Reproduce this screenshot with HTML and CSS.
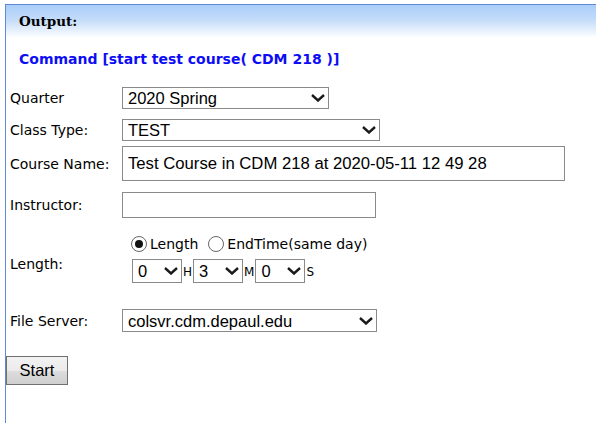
FILE: index.html
```html
<!DOCTYPE html>
<html>
<head>
<meta charset="utf-8">
<title>Output</title>
<link rel="stylesheet" href="styles.css">
</head>
<body>
<div class="panel">
  <div class="panel-head">Output:</div>
  <div class="command">Command [start test course( CDM 218 )]</div>
  <form class="form">
    <div class="row row-quarter">
      <label class="lbl">Quarter</label>
      <span class="sel sel-quarter">
        <select><option>2020 Spring</option></select>
        <svg class="chev" viewBox="0 0 14 8"><path d="M1 1 L7 6.5 L13 1" fill="none" stroke="#1a1a1a" stroke-width="2.4"/></svg>
      </span>
    </div>
    <div class="row row-type">
      <label class="lbl">Class Type:</label>
      <span class="sel sel-type">
        <select><option>TEST</option></select>
        <svg class="chev" viewBox="0 0 14 8"><path d="M1 1 L7 6.5 L13 1" fill="none" stroke="#1a1a1a" stroke-width="2.4"/></svg>
      </span>
    </div>
    <div class="row row-course">
      <label class="lbl">Course Name:</label>
      <input class="txt txt-course" type="text" value="Test Course in CDM 218 at 2020-05-11 12 49 28">
    </div>
    <div class="row row-instr">
      <label class="lbl">Instructor:</label>
      <input class="txt txt-instr" type="text" value="">
    </div>
    <div class="row row-length">
      <label class="lbl">Length:</label>
      <div class="length-box">
        <div class="radios">
          <span class="radio on"></span><span class="rlbl">Length</span>
          <span class="radio"></span><span class="rlbl">EndTime(same day)</span>
        </div>
        <div class="times">
          <span class="sel sel-small">
            <select><option>0</option></select>
            <svg class="chev" viewBox="0 0 14 8"><path d="M1 1 L7 6.5 L13 1" fill="none" stroke="#1a1a1a" stroke-width="2.4"/></svg>
          </span><span class="unit">H</span><span class="sel sel-small">
            <select><option>3</option></select>
            <svg class="chev" viewBox="0 0 14 8"><path d="M1 1 L7 6.5 L13 1" fill="none" stroke="#1a1a1a" stroke-width="2.4"/></svg>
          </span><span class="unit">M</span><span class="sel sel-small">
            <select><option>0</option></select>
            <svg class="chev" viewBox="0 0 14 8"><path d="M1 1 L7 6.5 L13 1" fill="none" stroke="#1a1a1a" stroke-width="2.4"/></svg>
          </span><span class="unit">S</span>
        </div>
      </div>
    </div>
    <div class="row row-server">
      <label class="lbl">File Server:</label>
      <span class="sel sel-server">
        <select><option>colsvr.cdm.depaul.edu</option></select>
        <svg class="chev" viewBox="0 0 14 8"><path d="M1 1 L7 6.5 L13 1" fill="none" stroke="#1a1a1a" stroke-width="2.4"/></svg>
      </span>
    </div>
    <div class="btn-row">
      <button type="button" class="btn">Start</button>
    </div>
  </form>
</div>
</body>
</html>
```

FILE: styles.css
```css
html, body {
  margin: 0;
  padding: 0;
  background: #ffffff;
}

body {
  padding: 4px 0 0 5px;
  font-family: "DejaVu Sans", Verdana, sans-serif;
  font-size: 14px;
  color: #000;
}

.panel {
  border-left: 1px solid #5f8bd4;
  border-top: 1px solid #5f8bd4;
  min-height: 430px;
}

.panel-head {
  height: 33px;
  box-sizing: border-box;
  padding: 8px 0 0 13px;
  background: linear-gradient(to bottom, #a9cdf9 0%, #c4dcf9 45%, #ffffff 100%);
  font-family: "DejaVu Serif", Georgia, serif;
  font-weight: bold;
  font-size: 13.5px;
}

.command {
  padding: 13px 0 0 13px;
  height: 37px;
  box-sizing: border-box;
  color: #0d0df5;
  font-weight: bold;
  font-size: 14px;
}

.form {
  margin: 0;
  padding: 12px 0 0 4px;
}

.row {
  display: flex;
  align-items: center;
}

.lbl {
  width: 112px;
  flex: none;
  font-size: 14px;
}

.row-type { margin-top: 10px; }
.row-course { margin-top: 5px; }
.row-instr { margin-top: 11px; }
.row-length { margin-top: 17px; }
.row-server { margin-top: 16px; }

.sel {
  position: relative;
  display: inline-block;
}

.sel select {
  -webkit-appearance: none;
  appearance: none;
  display: block;
  box-sizing: border-box;
  height: 22px;
  margin: 0;
  padding: 0 0 0 5px;
  border: 1px solid #8a8a8a;
  border-radius: 0;
  background: #fff;
  font-family: "Liberation Sans", Arial, sans-serif;
  font-size: 16.5px;
  color: #000;
}

.chev {
  position: absolute;
  right: 4px;
  top: 7px;
  width: 14px;
  height: 8px;
  pointer-events: none;
}

.sel-quarter select { width: 207px; }
.sel-type select { width: 258px; }
.sel-server select { width: 255px; height: 23px; }
.sel-server .chev { top: 8px; }

.txt {
  box-sizing: border-box;
  margin: 0;
  border: 1px solid #8a8a8a;
  font-family: "Liberation Sans", Arial, sans-serif;
  font-size: 16.7px;
  color: #000;
  padding: 0 0 0 5px;
  outline: none;
}

.txt-course {
  width: 443px;
  height: 35px;
}

.txt-instr {
  width: 254px;
  height: 26px;
}

.length-box {
  display: flex;
  flex-direction: column;
  padding-bottom: 10px;
}

.radios {
  display: flex;
  align-items: center;
  padding-left: 9px;
  height: 18px;
  font-size: 14px;
}

.radio {
  width: 16px;
  height: 16px;
  border: 1px solid #666;
  border-radius: 50%;
  box-sizing: border-box;
  position: relative;
  margin-right: 3px;
  background: #fff;
}

.radio.on::after {
  content: "";
  position: absolute;
  left: 3px;
  top: 3px;
  width: 8px;
  height: 8px;
  border-radius: 50%;
  background: #111;
}

.rlbl {
  margin-right: 10px;
}

.times {
  display: flex;
  align-items: center;
  margin-top: 6px;
  padding-left: 10px;
}

.sel-small select {
  width: 50px;
  height: 24px;
}

.sel-small .chev { top: 8px; }

.unit {
  font-size: 12px;
  padding: 0 1px;
  margin-top: 2px;
}

.btn-row {
  margin: 24px 0 0 -4px;
}

.btn {
  box-sizing: border-box;
  width: 62px;
  height: 29px;
  margin: 0;
  padding: 0;
  border: 1px solid #707070;
  border-radius: 0;
  background: linear-gradient(to bottom, #f2f2f2 0%, #ebebeb 50%, #dddddd 51%, #cfcfcf 100%);
  font-family: "Liberation Sans", Arial, sans-serif;
  font-size: 16.5px;
  color: #000;
}
```
